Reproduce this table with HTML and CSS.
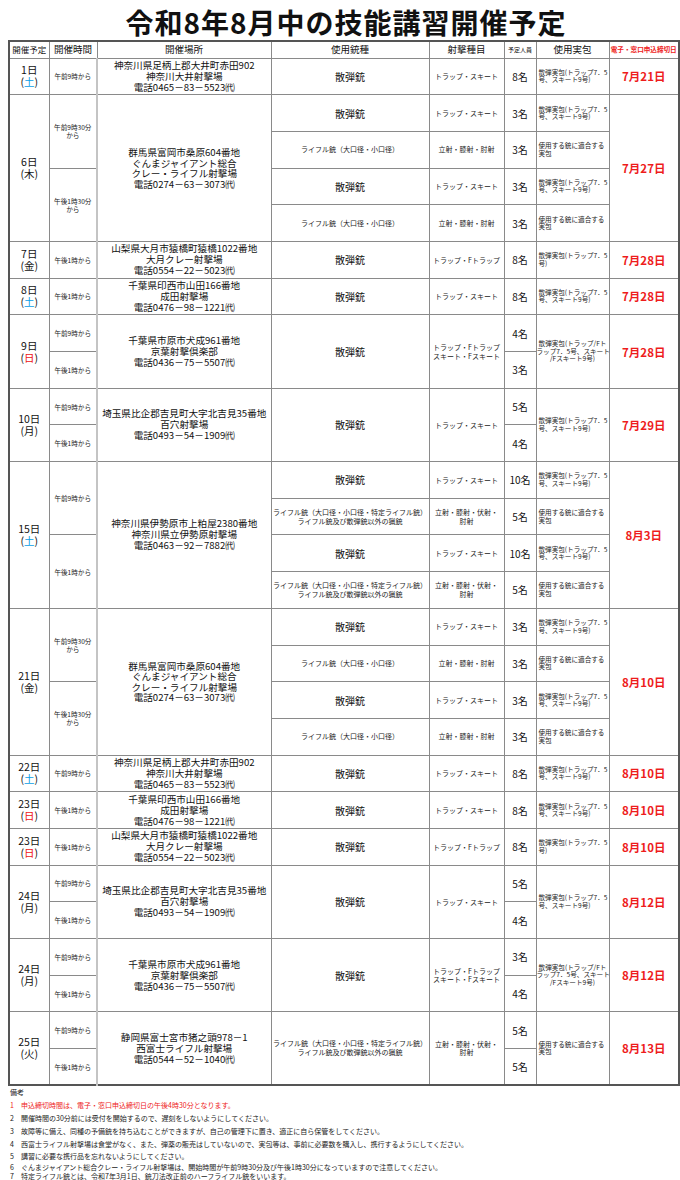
FILE: index.html
```html
<!DOCTYPE html>
<html lang="ja">
<head>
<meta charset="utf-8">
<title>令和8年8月中の技能講習開催予定</title>
<link rel="stylesheet" href="styles.css">
</head>
<body>
<div class="page">
  <h1 class="title">令和8年8月中の技能講習開催予定</h1>
  <table class="sched">
    <colgroup>
      <col class="c-date"><col class="c-time"><col class="c-place"><col class="c-gun"><col class="c-shoot"><col class="c-num"><col class="c-ammo"><col class="c-dl">
    </colgroup>
    <thead>
      <tr class="hd">
        <th class="h-sm">開催予定</th>
        <th>開催時間</th>
        <th>開催場所</th>
        <th>使用銃種</th>
        <th>射撃種目</th>
        <th class="h-xs">予定人員</th>
        <th>使用実包</th>
        <th class="h-red">電子・窓口申込締切日</th>
      </tr>
    </thead>
    <tbody>
      <!-- 1日 -->
      <tr class="u grp">
        <td class="d">1日<br>(<span class="sat">土</span>)</td>
        <td class="t">午前9時から</td>
        <td class="p">神奈川県足柄上郡大井町赤田902<br>神奈川大井射撃場<br>電話0465－83－5523㈹</td>
        <td class="g">散弾銃</td>
        <td class="s">トラップ・スキート</td>
        <td class="n">8名</td>
        <td class="a">散弾実包(トラップ7．5<br>号、スキート9号)</td>
        <td class="dl">7月21日</td>
      </tr>
      <!-- 6日 -->
      <tr class="u grp">
        <td class="d" rowspan="4">6日<br>(木)</td>
        <td class="t" rowspan="2">午前9時30分<br>から</td>
        <td class="p p4" rowspan="4">群馬県富岡市桑原604番地<br>ぐんまジャイアント総合<br>クレー・ライフル射撃場<br>電話0274－63－3073㈹</td>
        <td class="g">散弾銃</td>
        <td class="s">トラップ・スキート</td>
        <td class="n">3名</td>
        <td class="a">散弾実包(トラップ7．5<br>号、スキート9号)</td>
        <td class="dl" rowspan="4">7月27日</td>
      </tr>
      <tr class="u">
        <td class="gr">ライフル銃（大口径・小口径）</td>
        <td class="s">立射・膝射・肘射</td>
        <td class="n">3名</td>
        <td class="a">使用する銃に適合する<br>実包</td>
      </tr>
      <tr class="u">
        <td class="t" rowspan="2">午後1時30分<br>から</td>
        <td class="g">散弾銃</td>
        <td class="s">トラップ・スキート</td>
        <td class="n">3名</td>
        <td class="a">散弾実包(トラップ7．5<br>号、スキート9号)</td>
      </tr>
      <tr class="u">
        <td class="gr">ライフル銃（大口径・小口径）</td>
        <td class="s">立射・膝射・肘射</td>
        <td class="n">3名</td>
        <td class="a">使用する銃に適合する<br>実包</td>
      </tr>
      <!-- 7日 -->
      <tr class="u grp">
        <td class="d">7日<br>(金)</td>
        <td class="t">午後1時から</td>
        <td class="p">山梨県大月市猿橋町猿橋1022番地<br>大月クレー射撃場<br>電話0554－22－5023㈹</td>
        <td class="g">散弾銃</td>
        <td class="s">トラップ・Fトラップ</td>
        <td class="n">8名</td>
        <td class="a">散弾実包(トラップ7．5<br>号)</td>
        <td class="dl">7月28日</td>
      </tr>
      <!-- 8日 -->
      <tr class="u grp">
        <td class="d">8日<br>(<span class="sat">土</span>)</td>
        <td class="t">午後1時から</td>
        <td class="p">千葉県印西市山田166番地<br>成田射撃場<br>電話0476－98－1221㈹</td>
        <td class="g">散弾銃</td>
        <td class="s">トラップ・スキート</td>
        <td class="n">8名</td>
        <td class="a">散弾実包(トラップ7．5<br>号、スキート9号)</td>
        <td class="dl">7月28日</td>
      </tr>
      <!-- 9日 -->
      <tr class="u grp">
        <td class="d" rowspan="2">9日<br>(<span class="sun">日</span>)</td>
        <td class="t">午前9時から</td>
        <td class="p" rowspan="2">千葉県市原市犬成961番地<br>京葉射撃倶楽部<br>電話0436－75－5507㈹</td>
        <td class="g" rowspan="2">散弾銃</td>
        <td class="s" rowspan="2">トラップ・Fトラップ<br>スキート・Fスキート</td>
        <td class="n">4名</td>
        <td class="a ac" rowspan="2">散弾実包(トラップ/Fト<br>ラップ7．5号、スキート<br>/Fスキート9号)</td>
        <td class="dl" rowspan="2">7月28日</td>
      </tr>
      <tr class="u">
        <td class="t">午後1時から</td>
        <td class="n">3名</td>
      </tr>
      <!-- 10日 -->
      <tr class="u grp">
        <td class="d" rowspan="2">10日<br>(月)</td>
        <td class="t">午前9時から</td>
        <td class="p" rowspan="2">埼玉県比企郡吉見町大字北吉見35番地<br>百穴射撃場<br>電話0493－54－1909㈹</td>
        <td class="g" rowspan="2">散弾銃</td>
        <td class="s" rowspan="2">トラップ・スキート</td>
        <td class="n">5名</td>
        <td class="a" rowspan="2">散弾実包(トラップ7．5<br>号、スキート9号)</td>
        <td class="dl" rowspan="2">7月29日</td>
      </tr>
      <tr class="u">
        <td class="t">午後1時から</td>
        <td class="n">4名</td>
      </tr>
      <!-- 15日 -->
      <tr class="u grp">
        <td class="d" rowspan="4">15日<br>(<span class="sat">土</span>)</td>
        <td class="t" rowspan="2">午前9時から</td>
        <td class="p" rowspan="4">神奈川県伊勢原市上粕屋2380番地<br>神奈川県立伊勢原射撃場<br>電話0463－92－7882㈹</td>
        <td class="g">散弾銃</td>
        <td class="s">トラップ・スキート</td>
        <td class="n">10名</td>
        <td class="a">散弾実包(トラップ7．5<br>号、スキート9号)</td>
        <td class="dl" rowspan="4">8月3日</td>
      </tr>
      <tr class="u">
        <td class="gr">ライフル銃（大口径・小口径・特定ライフル銃）<br>ライフル銃及び散弾銃以外の猟銃</td>
        <td class="s">立射・膝射・伏射・<br>肘射</td>
        <td class="n">5名</td>
        <td class="a">使用する銃に適合する<br>実包</td>
      </tr>
      <tr class="u">
        <td class="t" rowspan="2">午後1時から</td>
        <td class="g">散弾銃</td>
        <td class="s">トラップ・スキート</td>
        <td class="n">10名</td>
        <td class="a">散弾実包(トラップ7．5<br>号、スキート9号)</td>
      </tr>
      <tr class="u">
        <td class="gr">ライフル銃（大口径・小口径・特定ライフル銃）<br>ライフル銃及び散弾銃以外の猟銃</td>
        <td class="s">立射・膝射・伏射・<br>肘射</td>
        <td class="n">5名</td>
        <td class="a">使用する銃に適合する<br>実包</td>
      </tr>
      <!-- 21日 -->
      <tr class="u grp">
        <td class="d" rowspan="4">21日<br>(金)</td>
        <td class="t" rowspan="2">午前9時30分<br>から</td>
        <td class="p p4" rowspan="4">群馬県富岡市桑原604番地<br>ぐんまジャイアント総合<br>クレー・ライフル射撃場<br>電話0274－63－3073㈹</td>
        <td class="g">散弾銃</td>
        <td class="s">トラップ・スキート</td>
        <td class="n">3名</td>
        <td class="a">散弾実包(トラップ7．5<br>号、スキート9号)</td>
        <td class="dl" rowspan="4">8月10日</td>
      </tr>
      <tr class="u">
        <td class="gr">ライフル銃（大口径・小口径）</td>
        <td class="s">立射・膝射・肘射</td>
        <td class="n">3名</td>
        <td class="a">使用する銃に適合する<br>実包</td>
      </tr>
      <tr class="u">
        <td class="t" rowspan="2">午後1時30分<br>から</td>
        <td class="g">散弾銃</td>
        <td class="s">トラップ・スキート</td>
        <td class="n">3名</td>
        <td class="a">散弾実包(トラップ7．5<br>号、スキート9号)</td>
      </tr>
      <tr class="u">
        <td class="gr">ライフル銃（大口径・小口径）</td>
        <td class="s">立射・膝射・肘射</td>
        <td class="n">3名</td>
        <td class="a">使用する銃に適合する<br>実包</td>
      </tr>
      <!-- 22日 -->
      <tr class="u grp">
        <td class="d">22日<br>(<span class="sat">土</span>)</td>
        <td class="t">午前9時から</td>
        <td class="p">神奈川県足柄上郡大井町赤田902<br>神奈川大井射撃場<br>電話0465－83－5523㈹</td>
        <td class="g">散弾銃</td>
        <td class="s">トラップ・スキート</td>
        <td class="n">8名</td>
        <td class="a">散弾実包(トラップ7．5<br>号、スキート9号)</td>
        <td class="dl">8月10日</td>
      </tr>
      <!-- 23日 -->
      <tr class="u grp">
        <td class="d">23日<br>(<span class="sun">日</span>)</td>
        <td class="t">午後1時から</td>
        <td class="p">千葉県印西市山田166番地<br>成田射撃場<br>電話0476－98－1221㈹</td>
        <td class="g">散弾銃</td>
        <td class="s">トラップ・スキート</td>
        <td class="n">8名</td>
        <td class="a">散弾実包(トラップ7．5<br>号、スキート9号)</td>
        <td class="dl">8月10日</td>
      </tr>
      <!-- 23日 -->
      <tr class="u grp">
        <td class="d">23日<br>(<span class="sun">日</span>)</td>
        <td class="t">午後1時から</td>
        <td class="p">山梨県大月市猿橋町猿橋1022番地<br>大月クレー射撃場<br>電話0554－22－5023㈹</td>
        <td class="g">散弾銃</td>
        <td class="s">トラップ・Fトラップ</td>
        <td class="n">8名</td>
        <td class="a">散弾実包(トラップ7．5<br>号)</td>
        <td class="dl">8月10日</td>
      </tr>
      <!-- 24日 -->
      <tr class="u grp">
        <td class="d" rowspan="2">24日<br>(月)</td>
        <td class="t">午前9時から</td>
        <td class="p" rowspan="2">埼玉県比企郡吉見町大字北吉見35番地<br>百穴射撃場<br>電話0493－54－1909㈹</td>
        <td class="g" rowspan="2">散弾銃</td>
        <td class="s" rowspan="2">トラップ・スキート</td>
        <td class="n">5名</td>
        <td class="a" rowspan="2">散弾実包(トラップ7．5<br>号、スキート9号)</td>
        <td class="dl" rowspan="2">8月12日</td>
      </tr>
      <tr class="u">
        <td class="t">午後1時から</td>
        <td class="n">4名</td>
      </tr>
      <!-- 24日 -->
      <tr class="u grp">
        <td class="d" rowspan="2">24日<br>(月)</td>
        <td class="t">午前9時から</td>
        <td class="p" rowspan="2">千葉県市原市犬成961番地<br>京葉射撃倶楽部<br>電話0436－75－5507㈹</td>
        <td class="g" rowspan="2">散弾銃</td>
        <td class="s" rowspan="2">トラップ・Fトラップ<br>スキート・Fスキート</td>
        <td class="n">3名</td>
        <td class="a ac" rowspan="2">散弾実包(トラップ/Fト<br>ラップ7．5号、スキート<br>/Fスキート9号)</td>
        <td class="dl" rowspan="2">8月12日</td>
      </tr>
      <tr class="u">
        <td class="t">午後1時から</td>
        <td class="n">4名</td>
      </tr>
      <!-- 25日 -->
      <tr class="u grp">
        <td class="d" rowspan="2">25日<br>(火)</td>
        <td class="t">午前9時から</td>
        <td class="p" rowspan="2">静岡県富士宮市猪之頭978－1<br>西富士ライフル射撃場<br>電話0544－52－1040㈹</td>
        <td class="gr" rowspan="2">ライフル銃（大口径・小口径・特定ライフル銃）<br>ライフル銃及び散弾銃以外の猟銃</td>
        <td class="s" rowspan="2">立射・膝射・伏射・<br>肘射</td>
        <td class="n">5名</td>
        <td class="a" rowspan="2">使用する銃に適合する<br>実包</td>
        <td class="dl" rowspan="2">8月13日</td>
      </tr>
      <tr class="u">
        <td class="t">午後1時から</td>
        <td class="n">5名</td>
      </tr>
    </tbody>
  </table>
  <div class="notes">
    <p class="note-head">備考</p>
    <p class="note red"><span class="num">1</span>申込締切時間は、電子・窓口申込締切日の午後4時30分となります。</p>
    <p class="note"><span class="num">2</span>開催時間の30分前には受付を開始するので、遅刻をしないようにしてください。</p>
    <p class="note"><span class="num">3</span>故障等に備え、同種の予備銃を持ち込むことができますが、自己の管理下に置き、適正に自ら保管をしてください。</p>
    <p class="note"><span class="num">4</span>西富士ライフル射撃場は食堂がなく、また、弾薬の販売はしていないので、実包等は、事前に必要数を購入し、携行するようにしてください。</p>
    <p class="note"><span class="num">5</span>講習に必要な携行品を忘れないようにしてください。</p>
    <p class="note tight"><span class="num">6</span>ぐんまジャイアント総合クレー・ライフル射撃場は、開始時間が午前9時30分及び午後1時30分になっていますので注意してください。</p>
    <p class="note tight"><span class="num">7</span>特定ライフル銃とは、令和7年3月1日、銃刀法改正前のハーフライフル銃をいいます。</p>
  </div>
</div>
</body>
</html>
```

FILE: styles.css
```css
* { box-sizing: border-box; }

body {
  margin: 0;
  background: #ffffff;
  color: #1a1a1a;
  font-family: "Noto Sans CJK JP", "Noto Sans", sans-serif;
}

.page {
  width: 680px;
  padding: 0 2px 0 8px;
}

.title {
  margin: 0;
  height: 40px;
  line-height: 44px;
  text-align: center;
  font-size: 28px;
  font-weight: bold;
  letter-spacing: 1px;
  color: #111;
  padding-left: 6px;
}

.sched {
  width: 670px;
  border-collapse: collapse;
  table-layout: fixed;
  border: 2px solid #555;
}

.c-date { width: 40px; }
.c-time { width: 48px; }
.c-place { width: 174px; }
.c-gun { width: 158px; }
.c-shoot { width: 75px; }
.c-num { width: 32px; }
.c-ammo { width: 73px; }
.c-dl { width: 70px; }

.sched th,
.sched td {
  border: 1px solid #8a8a8a;
  padding: 0;
  text-align: center;
  vertical-align: middle;
  overflow: hidden;
}

.sched tr.hd { height: 17px; }
.sched th {
  font-size: 9.5px;
  font-weight: normal;
  line-height: 15px;
  white-space: nowrap;
  color: #111;
}
.sched th.h-sm { font-size: 8.5px; }
.sched th.h-xs { font-size: 6px; }
.sched th.h-red { font-size: 6.6px; color: #ee2222; font-weight: bold; }

.sched tr.u { height: 36.7px; }
.sched tr.grp > td { border-top: 1px solid #666; }

.sched td.t { border-right: 2px solid #c4c4c4; }

.d {
  font-size: 10.5px;
  line-height: 12px;
  color: #111;
}
.sat { color: #0aa0e6; }
.sun { color: #ee1111; }

.t {
  font-size: 6.6px;
  line-height: 8px;
  color: #222;
}

.sched td.p {
  font-size: 9.6px;
  line-height: 11px;
  color: #111;
  white-space: nowrap;
}
.sched td.p4 { line-height: 10.5px; }

.g {
  font-size: 10px;
  color: #111;
}

.gr {
  font-size: 7px;
  line-height: 9px;
  color: #222;
  white-space: nowrap;
}

.s {
  font-size: 7px;
  line-height: 8.5px;
  color: #222;
  white-space: nowrap;
}

.n {
  font-size: 10px;
  color: #111;
}

.sched td.a {
  font-size: 6.6px;
  line-height: 7.5px;
  text-align: left;
  padding-left: 2px;
  white-space: nowrap;
  color: #222;
}
.sched td.ac { text-align: center; padding-left: 0; }

.dl {
  font-size: 11.5px;
  font-weight: bold;
  color: #ee1c1c;
}

.notes {
  padding-left: 2px;
  font-size: 7px;
  color: #222;
}
.note-head {
  margin: 0;
  line-height: 13px;
}
.note {
  margin: 0;
  line-height: 12.8px;
  white-space: nowrap;
}
.note.tight { line-height: 9px; }
.note.red { color: #ee2222; }
.num {
  display: inline-block;
  width: 11px;
}
```
